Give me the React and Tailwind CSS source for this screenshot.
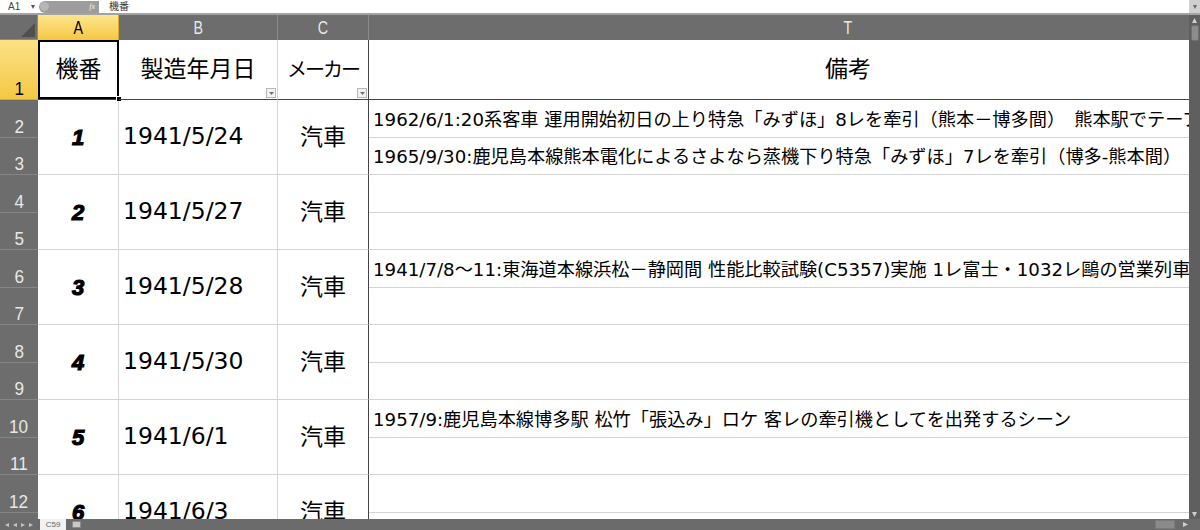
import React from 'react'

// Excel-like sheet: C59 locomotive list
const jp = "font-['DejaVu_Sans','Noto_Sans_CJK_JP',sans-serif]"
const hd = "font-['Liberation_Sans','Noto_Sans_CJK_JP',sans-serif]"

const locos = [
  { no: '1', date: '1941/5/24', maker: '汽車' },
  { no: '2', date: '1941/5/27', maker: '汽車' },
  { no: '3', date: '1941/5/28', maker: '汽車' },
  { no: '4', date: '1941/5/30', maker: '汽車' },
  { no: '5', date: '1941/6/1', maker: '汽車' },
  { no: '6', date: '1941/6/3', maker: '汽車' },
]

const notes = {
  2: '1962/6/1:20系客車 運用開始初日の上り特急「みずほ」8レを牽引（熊本－博多間）　熊本駅でテープカット',
  3: '1965/9/30:鹿児島本線熊本電化によるさよなら蒸機下り特急「みずほ」7レを牽引（博多-熊本間）',
  6: '1941/7/8～11:東海道本線浜松－静岡間 性能比較試験(C5357)実施 1レ富士・1032レ鷗の営業列車',
  10: '1957/9:鹿児島本線博多駅 松竹「張込み」ロケ 客レの牽引機としてを出発するシーン',
}

function FilterButton() {
  return (
    <span className="absolute right-[1px] bottom-[1px] w-[10px] h-[10px] bg-[#f2f2f2] border border-[#b8b8b8] flex items-center justify-center">
      <svg width="5" height="3" viewBox="0 0 5 3">
        <path d="M0 0h5L2.5 3z" fill="#707070" />
      </svg>
    </span>
  )
}

function Tri({ dir = 'right', color = '#c4c4c4', size = 5 }) {
  const d = dir === 'right' ? 'M0 0L5 2.5L0 5z' : dir === 'left' ? 'M5 0L0 2.5L5 5z' : dir === 'up' ? 'M0 5L2.5 0L5 5z' : 'M0 0L5 0L2.5 5z'
  return (
    <svg width={size} height={size} viewBox="0 0 5 5">
      <path d={d} fill={color} />
    </svg>
  )
}

function RowHead({ n }) {
  return (
    <div className="bg-[#6d6d6d] border-b border-[#858585] flex items-end justify-center pb-[1px] overflow-hidden">
      <span className={`${hd} text-[19px] leading-none text-[#e8e8e8] scale-x-90`}>{n}</span>
    </div>
  )
}

function ColHead({ label, active = false }) {
  return (
    <div
      className={`flex items-center justify-center border-r ${
        active
          ? 'bg-gradient-to-b from-[#fce68c] to-[#f5c73e] border-[#d9a928] text-black'
          : 'bg-[#6d6d6d] border-[#8a8a8a] text-[#e8e8e8]'
      }`}
    >
      <span className={`${hd} text-[19px] leading-none scale-x-75`}>{label}</span>
    </div>
  )
}

export default function App() {
  const rows = []
  for (let r = 2; r <= 13; r++) rows.push(r)

  return (
    <div className="w-[1200px] h-[530px] overflow-hidden flex flex-col bg-white select-none">
      {/* formula bar */}
      <div className="h-[13px] flex items-center bg-white shrink-0">
        <span className={`${hd} pl-[8px] w-[31px] text-[10px] text-[#444]`}>A1</span>
        <span className="w-[8px] flex items-center">
          <Tri dir="down" color="#555" size={4} />
        </span>
        <div className="w-[60px] h-[12px] bg-[#9d9d9d] rounded-l-full flex items-center justify-between pr-[4px]">
          <span className="w-[9px] h-[9px] ml-[1px] rounded-full bg-[#b5b5b5]" />
          <span className="font-['Liberation_Serif',serif] italic text-[8px] text-[#eee]">fx</span>
        </div>
        <span className={`${jp} ml-[10px] text-[10px] text-[#333]`}>機番</span>
        <div className="ml-auto w-[11px] h-[13px] bg-[#cfcfcf] flex items-center justify-center">
          <Tri dir="down" color="#666" size={4} />
        </div>
      </div>
      <div className="h-[2px] bg-[#a3a3a3] shrink-0" />

      <div className="flex flex-1 min-h-0">
        {/* sheet grid */}
        <div className="flex-1 overflow-hidden">
          <div className="grid grid-cols-[38px_81px_159px_91px_958px] grid-rows-[25px_60px_repeat(12,37.5px)] w-[1327px]">
            {/* corner */}
            <div className="bg-[#6d6d6d] border-r border-b border-[#8a8a8a] relative">
              <svg className="absolute right-[2px] bottom-[2px]" width="14" height="14" viewBox="0 0 14 14">
                <path d="M14 0V14H0z" fill="#4f4f4f" />
              </svg>
            </div>
            <ColHead label="A" active />
            <ColHead label="B" />
            <ColHead label="C" />
            <ColHead label="T" />

            {/* row 1 */}
            <div className="bg-gradient-to-b from-[#fbe184] to-[#f5c843] border-b border-[#d9a928] flex items-end justify-center pb-[1px]">
              <span className={`${hd} text-[19px] leading-none text-black scale-x-90`}>1</span>
            </div>
            <div className={`${jp} relative flex items-center justify-center text-[23px] text-black border-b border-[#444]`}>
              機番
              <div className="absolute inset-0 border-2 border-black" />
              <div className="absolute -right-[3px] -bottom-[3px] w-[6px] h-[6px] bg-black border border-white" />
            </div>
            <div className={`${jp} relative flex items-center justify-center text-[23px] text-black border-r border-b border-r-[#d4d4d4] border-b-[#444]`}>
              製造年月日
              <FilterButton />
            </div>
            <div className={`${jp} relative flex items-center justify-center whitespace-nowrap text-[20px] tracking-[-2px] text-black border-r border-b border-r-[#444] border-b-[#444]`}>
              メーカー
              <FilterButton />
            </div>
            <div className={`${jp} flex items-center justify-center text-[23px] text-black border-b border-[#444]`}>
              備考
            </div>

            {/* data rows */}
            {rows.map((r) => {
              const first = r % 2 === 0
              const loco = locos[(r - 2) / 2]
              return (
                <React.Fragment key={r}>
                  <RowHead n={r} />
                  {first && (
                    <>
                      <div className="row-span-2 flex items-center justify-center border-r border-b border-[#d4d4d4]">
                        <span className="font-['Liberation_Sans',sans-serif] font-black italic text-[22px] text-black [-webkit-text-stroke:1.2px_black]">
                          {loco.no}
                        </span>
                      </div>
                      <div className={`${jp} row-span-2 flex items-center pl-[4px] text-[23.5px] text-black border-r border-b border-[#d4d4d4]`}>
                        {loco.date}
                      </div>
                      <div className={`${jp} row-span-2 flex items-center justify-center text-[23px] text-black border-r border-b border-r-[#444] border-b-[#d4d4d4]`}>
                        {loco.maker}
                      </div>
                    </>
                  )}
                  <div className={`${jp} flex items-center pl-[4px] pt-[2px] text-[18.2px] text-black whitespace-nowrap overflow-hidden border-b border-[#d4d4d4]`}>
                    {notes[r] || ''}
                  </div>
                </React.Fragment>
              )
            })}
          </div>
        </div>

        {/* vertical scrollbar */}
        <div className="w-[11px] bg-[#5f5f5f] flex flex-col items-center shrink-0">
          <span className="mt-[3px]">
            <Tri dir="up" color="#cfcfcf" size={5} />
          </span>
          <div className="mt-[2px] w-[8px] h-[16px] bg-[#8c8c8c] rounded-[2px] border border-[#6f6f6f]" />
          <span className="mt-auto mb-[2px]">
            <Tri dir="down" color="#cfcfcf" size={5} />
          </span>
        </div>
      </div>

      {/* sheet tabs */}
      <div className="h-[11px] bg-[#6b6b6b] flex items-center shrink-0">
        <div className="w-[38px] flex items-center justify-around px-[3px]">
          <Tri dir="left" size={4} />
          <Tri dir="left" size={4} />
          <Tri dir="right" size={4} />
          <Tri dir="right" size={4} />
        </div>
        <div className={`${hd} ml-[2px] h-[11px] w-[26px] bg-[#f1f1f1] text-[8px] leading-[11px] text-[#666] text-center`}>
          C59
        </div>
        <div className="ml-[6px] w-[9px] h-[7px] bg-[#c9c9c9] border border-[#8a8a8a] rounded-[1px]" />
        <div className="ml-auto w-[20px] h-[9px] bg-[#8a8a8a] border border-[#7a7a7a] mr-[8px]" />
        <span className="mr-[12px] flex items-center">
          <Tri dir="right" color="#cfcfcf" size={5} />
        </span>
      </div>
    </div>
  )
}
